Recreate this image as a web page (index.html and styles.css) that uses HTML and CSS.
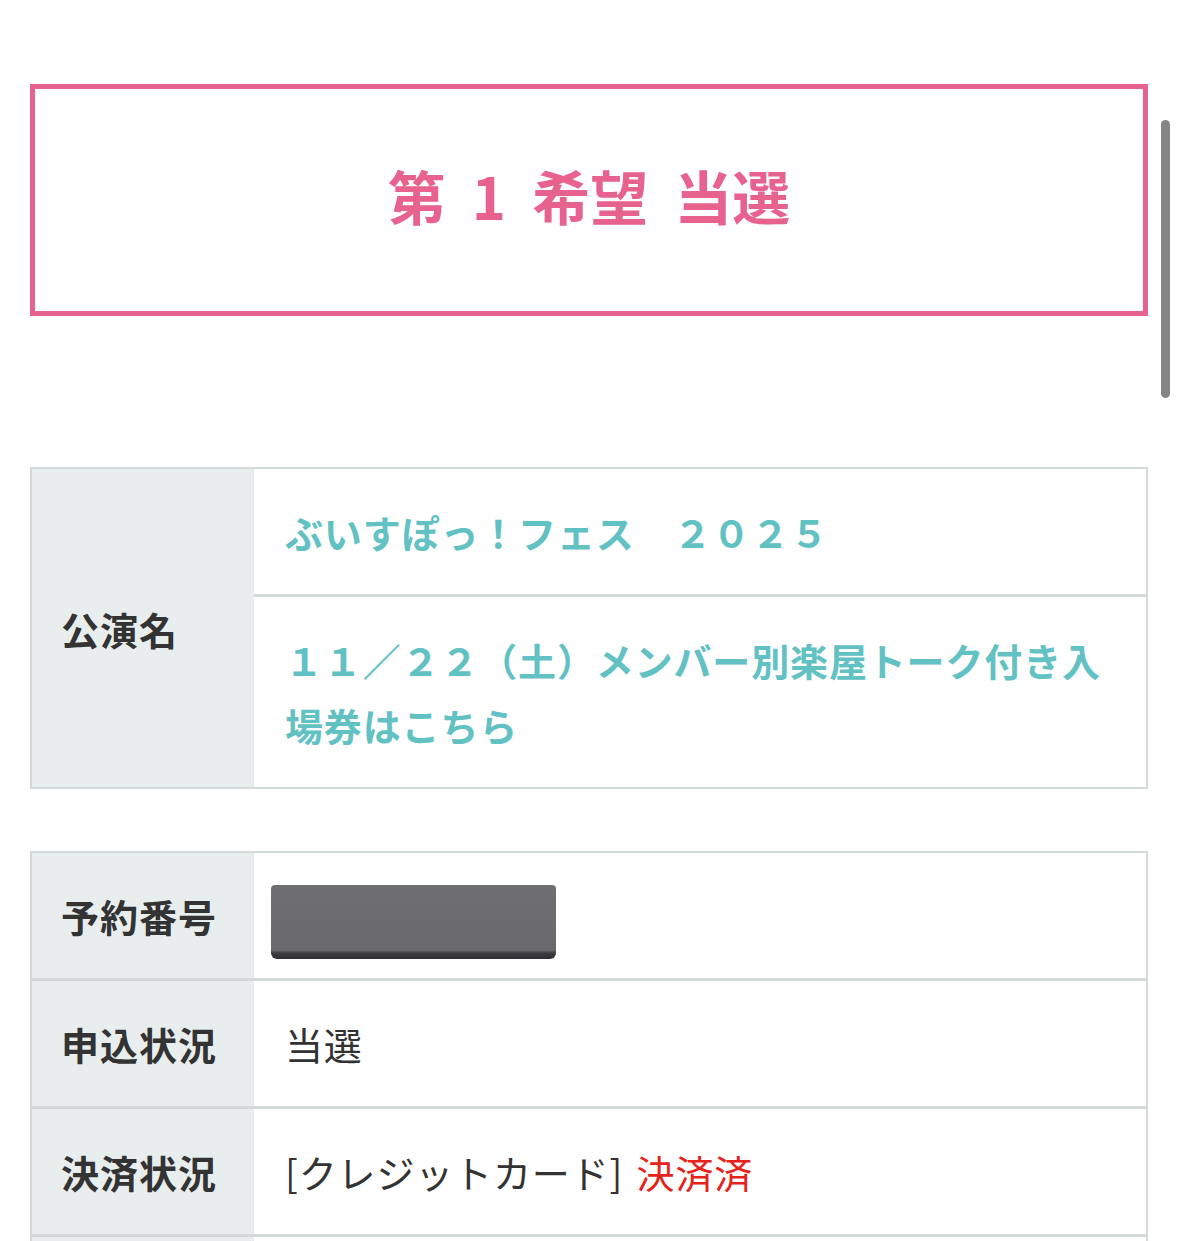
FILE: index.html
```html
<!DOCTYPE html>
<html lang="ja">
<head>
<meta charset="utf-8">
<title>申込詳細</title>
<link rel="stylesheet" href="styles.css">
</head>
<body>
<main class="page">
  <section class="result-box">
    <h1 class="result-title">第 1 希望 当選</h1>
  </section>

  <div class="table table-event">
    <div class="label label-span">公演名</div>
    <div class="value value-link first">ぶいすぽっ！フェス　２０２５</div>
    <div class="value value-link">１１／２２（土）メンバー別楽屋トーク付き入場券はこちら</div>
  </div>

  <div class="table table-detail">
    <div class="label first">予約番号</div>
    <div class="value first"><span class="redacted"></span></div>
    <div class="label">申込状況</div>
    <div class="value">当選</div>
    <div class="label">決済状況</div>
    <div class="value">[クレジットカード] <span class="paid">決済済</span></div>
    <div class="label">&nbsp;</div>
    <div class="value">&nbsp;</div>
  </div>
</main>
<div class="scrollbar"></div>
</body>
</html>
```
FILE: styles.css
```css
html, body {
  margin: 0;
  padding: 0;
  background: #ffffff;
  height: 1241px;
  overflow: hidden;
}

body {
  font-family: "Noto Sans CJK JP", "Noto Sans", sans-serif;
  color: #333333;
}

.page {
  padding: 84px 31px 0 30px;
  display: flex;
  flex-direction: column;
}

.result-box {
  height: 222px;
  border: 5px solid #e8628e;
  display: flex;
  align-items: center;
  justify-content: center;
}

.result-title {
  margin: 0;
  font-size: 58px;
  font-weight: 700;
  color: #e8628e;
  word-spacing: 13px;
  line-height: 1;
  padding-bottom: 10px;
}

.table {
  border: 2px solid #d4dada;
  display: grid;
  grid-template-columns: 222px 1fr;
  font-size: 38px;
  line-height: 65px;
}

.table-event {
  margin-top: 151px;
}

.table-detail {
  margin-top: 62px;
}

.label {
  background: #e8eded;
  font-weight: 700;
  color: #333333;
  letter-spacing: 1px;
  padding: 30px 0 30px 29px;
  display: flex;
  align-items: center;
  border-top: 3px solid #d4dada;
}

.value {
  padding: 30px 31px 30px 31px;
  border-top: 3px solid #d4dada;
  background: #ffffff;
  font-weight: 400;
  letter-spacing: 0.85px;
  color: #333333;
}

.first {
  border-top: none;
}

.label-span {
  grid-row: span 2;
  border-top: none;
}

.value-link {
  color: #62c1c3;
  font-weight: 700;
}

.paid {
  color: #e5231b;
  margin-left: 4px;
}

.redacted {
  display: block;
  width: 285px;
  height: 74px;
  margin: 2px 0 -11px -14px;
  border-radius: 4px 4px 6px 6px;
  background: linear-gradient(to bottom, #6f6f71 0%, #6a6a6c 88%, #3c3c40 92%, #2e2e34 100%);
}

.scrollbar {
  position: fixed;
  top: 120px;
  right: 9px;
  width: 9px;
  height: 278px;
  border-radius: 5px;
  background: #858585;
}
```
